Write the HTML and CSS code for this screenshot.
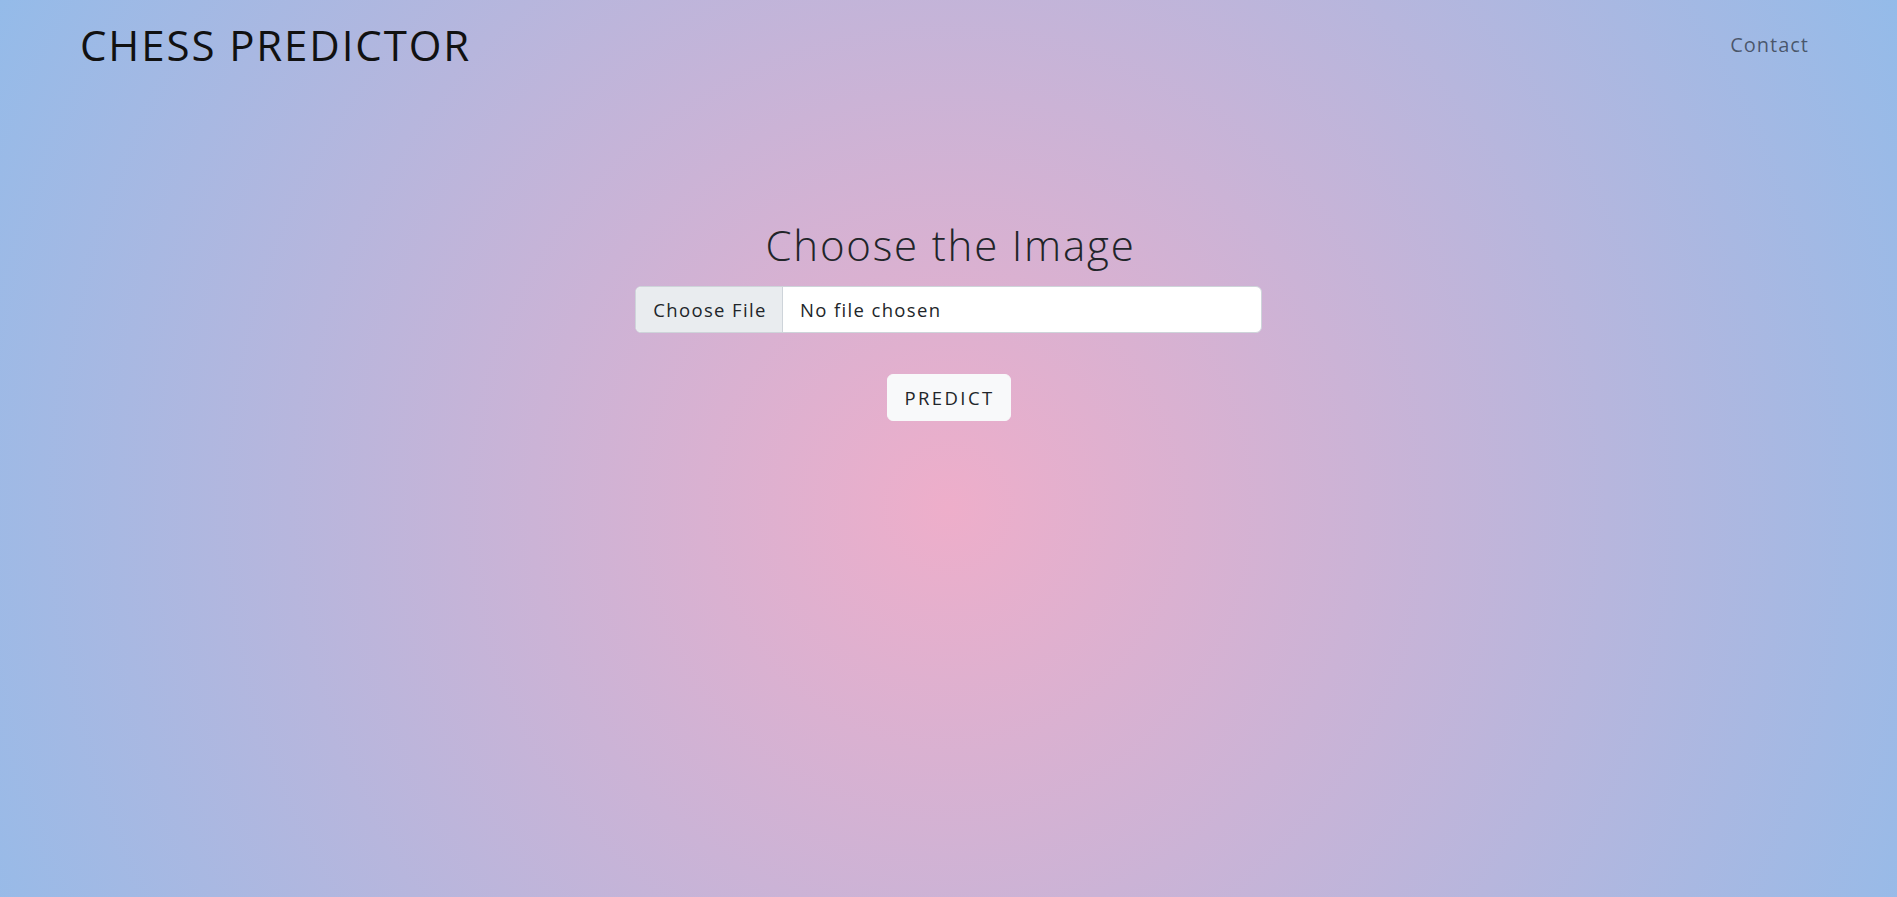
FILE: index.html
```html
<!DOCTYPE html>
<html lang="en">
<head>
<meta charset="utf-8">
<title>Chess Predictor</title>
<link rel="stylesheet" href="styles.css">
</head>
<body>
<div class="page">
  <nav class="navbar">
    <a class="brand" href="#">CHESS PREDICTOR</a>
    <a class="nav-link" href="#">Contact</a>
  </nav>
  <main class="main">
    <h1 class="heading">Choose the Image</h1>
    <form class="upload">
      <label class="file-input">
        <span class="file-btn">Choose File</span>
        <span class="file-name">No file chosen</span>
      </label>
      <button class="predict" type="button">PREDICT</button>
    </form>
  </main>
</div>
</body>
</html>
```

FILE: styles.css
```css
* { box-sizing: border-box; }
html, body { margin: 0; padding: 0; }
body {
  font-family: "Open Sans", "Liberation Sans", sans-serif;
  color: #212529;
}
.page {
  min-height: 100vh;
  background: radial-gradient(circle at 50% 508px, #eeaeca 0%, #94bbe9 100%);
}
.navbar {
  height: 88px;
  padding: 0 81px 0 80px;
  display: flex;
  align-items: center;
  justify-content: space-between;
}
.brand {
  font-size: 42px;
  font-weight: 400;
  color: #111;
  text-decoration: none;
  letter-spacing: 1.9px;
}
.nav-link {
  font-size: 20px;
  color: rgba(0, 0, 0, 0.55);
  text-decoration: none;
  letter-spacing: 1px;
  padding: 0 7px 0 8px;
}
.main {
  display: flex;
  flex-direction: column;
  align-items: center;
  padding-top: 132px;
}
.heading {
  margin: 0 0 16px;
  padding-left: 4px;
  font-size: 42px;
  font-weight: 300;
  line-height: 1.2;
  letter-spacing: 1.8px;
  color: #212529;
}
.upload {
  display: flex;
  flex-direction: column;
  align-items: center;
  gap: 41px;
}
.file-input {
  width: 627px;
  height: 47px;
  display: flex;
  background: #fff;
  border: 1px solid #ced4da;
  border-radius: 6px;
  overflow: hidden;
  font-size: 18.5px;
  letter-spacing: 1.35px;
  cursor: pointer;
}
.file-btn {
  width: 147px;
  display: flex;
  align-items: center;
  justify-content: center;
  padding-left: 2px;
  background: #e9ecef;
  border-right: 1px solid #ced4da;
  color: #212529;
}
.file-name {
  display: flex;
  align-items: center;
  padding-left: 17px;
  color: #212529;
}
.predict {
  width: 124px;
  height: 47px;
  padding: 0 0 0 2px;
  font-family: inherit;
  font-size: 18.5px;
  letter-spacing: 2.4px;
  color: #212529;
  background: #f8f9fa;
  border: 1px solid #f8f9fa;
  border-radius: 6px;
}
```
